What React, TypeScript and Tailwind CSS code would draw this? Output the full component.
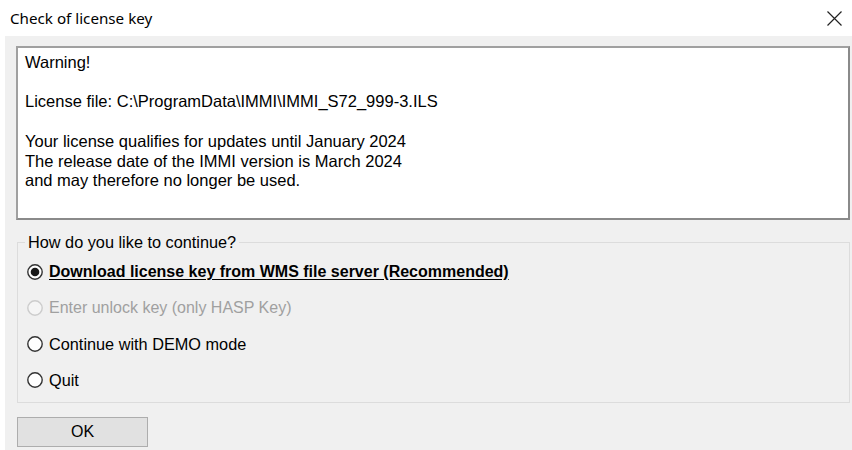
import React from "react";

const options = [
  { label: "Download license key from WMS file server (Recommended)", checked: true, disabled: false },
  { label: "Enter unlock key (only HASP Key)", checked: false, disabled: true },
  { label: "Continue with DEMO mode", checked: false, disabled: false },
  { label: "Quit", checked: false, disabled: false },
];

function Radio({ checked, disabled }: { checked: boolean; disabled: boolean }) {
  return (
    <svg width="16" height="16" viewBox="0 0 16 16" className="shrink-0">
      <circle
        cx="8"
        cy="8"
        r="7.2"
        fill={disabled ? "#f5f5f5" : "#ffffff"}
        stroke={disabled ? "#cccccc" : "#333333"}
        strokeWidth="1.4"
      />
      {checked && <circle cx="8" cy="8" r="4.3" fill="#1a1a1a" />}
    </svg>
  );
}

export default function App() {
  return (
    <div
      className="w-[852px] h-[450px] bg-white flex flex-col overflow-hidden text-black"
      style={{ fontFamily: "'Liberation Sans', Arial, sans-serif" }}
    >
      {/* title bar */}
      <div className="h-[36px] flex items-center justify-between pl-[10px] pr-[9px] shrink-0">
        <span className="text-[15.2px] text-black" style={{ fontFamily: "'Noto Sans', sans-serif" }}>
          Check of license key
        </span>
        <svg width="17" height="17" viewBox="0 0 17 17">
          <path d="M1.5 1.5 L15.5 15.5 M15.5 1.5 L1.5 15.5" stroke="#222" strokeWidth="1.2" />
        </svg>
      </div>

      {/* client area */}
      <div className="flex-1 ml-[5px] bg-[#f0f0f0] pl-[11px] pr-[2px] pt-[10px] flex flex-col">
        <div className="h-[174px] bg-white border-2 border-t-[#a0a0a0] border-l-[#a0a0a0] border-r-[#8a8a8a] border-b-[#8a8a8a] px-[7px] pt-[5px] text-[16.5px] leading-[19.7px]">
          <div>Warning!</div>
          <div>&nbsp;</div>
          <div>License file: C:\ProgramData\IMMI\IMMI_S72_999-3.ILS</div>
          <div>&nbsp;</div>
          <div>Your license qualifies for updates until January 2024</div>
          <div>The release date of the IMMI version is March 2024</div>
          <div>and may therefore no longer be used.</div>
        </div>

        <fieldset className="mt-[13px] ml-[1px] h-[170px] border border-[#dcdcdc] pl-[9px] pt-[3px]">
          <legend className="ml-[-2px] px-[3px] text-[16.3px] leading-[18px]">How do you like to continue?</legend>
          <div className="flex flex-col">
            {options.map((o) => (
              <div key={o.label} className="h-[36px] flex items-center gap-[6px]">
                <Radio checked={o.checked} disabled={o.disabled} />
                <span
                  className={
                    (o.checked
                      ? "text-[16px] font-bold underline underline-offset-2 "
                      : o.disabled
                      ? "text-[16px] "
                      : "text-[16.3px] ") + (o.disabled ? "text-[#a0a0a0]" : "text-black")
                  }
                >
                  {o.label}
                </span>
              </div>
            ))}
          </div>
        </fieldset>

        <div className="mt-[14px] ml-[1px]">
          <button className="w-[131px] h-[30px] bg-[#e1e1e1] border border-[#adadad] text-[16px] text-black">
            OK
          </button>
        </div>
      </div>
    </div>
  );
}
